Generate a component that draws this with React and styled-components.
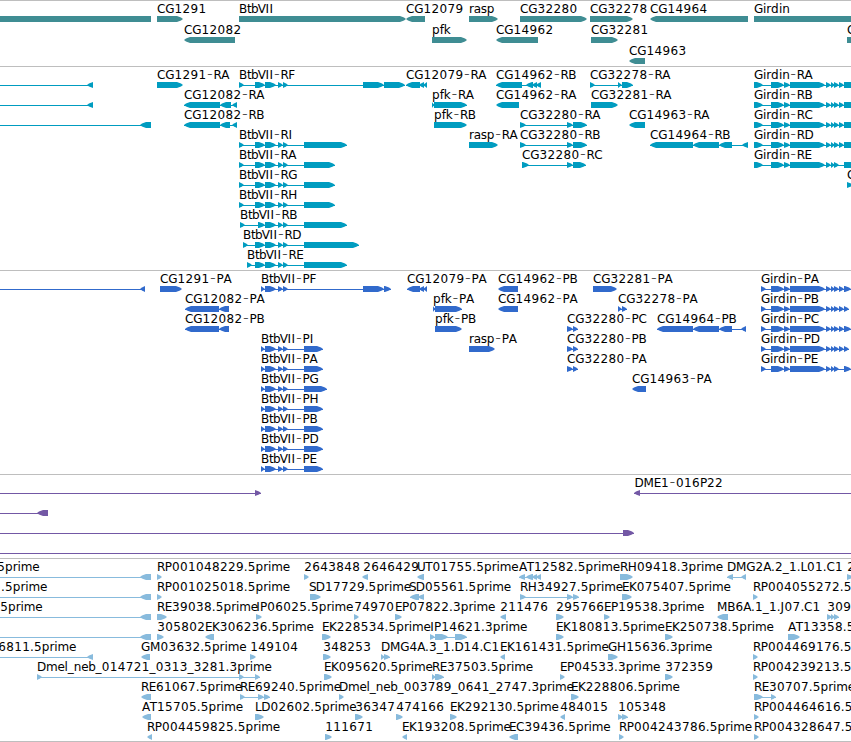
import styled, { createGlobalStyle } from "styled-components";

const WIDTH = 851;
const OFF_LEFT = [-30, -20];
const OFF_RIGHT = [870, 880];

// horizontal advance of each character in the labels
const ADVANCES = {
    A: 7.8, B: 8, C: 8.3, D: 9, E: 7, F: 7, G: 9, H: 9, I: 4, J: 4, K: 7.6,
    L: 6.3, M: 10.2, P: 7, R: 7.8, S: 6.7, T: 7, U: 8.3, V: 7, a: 7, b: 7.3,
    d: 7.8, e: 7, f: 4, i: 3.3, k: 7, l: 3.3, m: 11.5, n: 7.4, p: 7.7, r: 4.8,
    s: 6, t: 4, ".": 3.7, "-": 7.2, _: 6,
};

// nudges a glyph inside its advance
const OFFSETS = { V: -0.6, "-": 0.7, I: 0.2 };

const BAR_TOP = 15;
const BAR_BOTTOM = 21;

const feature = (label, x, dir, ...exons) => ({ label, x, dir, exons });

const labelPositions = (label, start) => {
    let x = start;
    return [...label]
        .map(char => {
            const digit = /\d/.test(char);
            const at = x + (digit ? 0.2 : OFFSETS[char] || 0);
            x += digit ? 8 : ADVANCES[char];
            return at.toFixed(1);
        })
        .join(" ");
};

const exonPoints = ([start, end], dir) => {
    const middle = (BAR_TOP + BAR_BOTTOM) / 2;
    const tip = Math.min(6, end - start);
    if (dir === "<") {
        return `${start},${middle} ${start + 2},${middle - 1.5} ${start + tip},${BAR_TOP} ${end},${BAR_TOP} ${end},${BAR_BOTTOM} ${start + tip},${BAR_BOTTOM} ${start + 2},${middle + 1.5}`;
    }
    return `${start},${BAR_TOP} ${end - tip},${BAR_TOP} ${end - 2},${middle - 1.5} ${end},${middle} ${end - 2},${middle + 1.5} ${end - tip},${BAR_BOTTOM} ${start},${BAR_BOTTOM}`;
};

// BtbVII and Girdin isoforms share most of their exons
const btbVII = (name, start, second, ...rest) =>
    feature(
        `BtbVII-${name}`, start, ">",
        [start, start + 5], [second, 265], [265, 276], [278, 283], [283, 288], ...rest
    );

const btbVIIProtein = (name, ...rest) =>
    feature(
        `BtbVII-${name}`, 261, ">",
        [261, 265], [265, 276], [278, 283], [283, 288], ...rest
    );

const girdin = (name, first, last, gap) =>
    feature(
        `Girdin-${name}`, first[0], ">",
        first, [771, 784], [784, 790], [790, 825], [826, 831], [831, 835], [834, 839],
        ...(gap ? [] : [[839, 844]]), last
    );

const GENES = [
    [
        feature("", 0, "<", [-20, 151]),
        feature("CG1291", 157, ">", [157, 183]),
        feature("BtbVII", 239, ">", [239, 406]),
        feature("CG12079", 406, "<", [406, 425]),
        feature("rasp", 469, ">", [469, 498]),
        feature("CG32280", 520, ">", [520, 587]),
        feature("CG32278", 590, ">", [590, 633]),
        feature("CG14964", 650, "<", [650, 748]),
        feature("Girdin", 754, ">", [754, 870]),
    ],
    [
        feature("CG12082", 184, "<", [184, 235]),
        feature("pfk", 432, ">", [432, 467]),
        feature("CG14962", 496, "<", [496, 538]),
        feature("CG32281", 591, ">", [591, 618]),
        feature("C", 847, ">", [847, 870]),
    ],
    [feature("CG14963", 629, "<", [629, 645])],
];

const TRANSCRIPTS = [
    [
        feature("", 0, "<", OFF_LEFT, [87, 93]),
        feature("CG1291-RA", 157, ">", [157, 183]),
        btbVII("RF", 239, 255, [363, 384], [384, 405]),
        feature("CG12079-RA", 406, "<", [406, 420], [419, 424], [423, 427]),
        feature("CG14962-RB", 496, "<", [496, 522], [526, 533], [532, 537], [536, 541]),
        feature("CG32278-RA", 590, ">", [590, 595], [618, 622], [622, 633]),
        girdin("RA", [754, 763], [844, 870]),
    ],
    [
        feature("", 0, "<", OFF_LEFT, [87, 93]),
        feature("CG12082-RA", 184, "<", [184, 220], [220, 231], [232, 237]),
        feature("pfk-RA", 432, ">", [432, 435], [434, 467]),
        feature("CG14962-RA", 496, "<", [496, 519]),
        feature("CG32281-RA", 591, ">", [591, 618]),
        girdin("RB", [754, 763], [844, 870]),
    ],
    [
        feature("", 0, "<", OFF_LEFT, [140, 151]),
        feature("CG12082-RB", 184, "<", [184, 220], [220, 230], [232, 237]),
        feature("pfk-RB", 434, ">", [434, 467]),
        feature("CG32280-RA", 520, ">", [520, 526], [567, 573], [573, 587]),
        feature("CG14963-RA", 629, "<", [629, 645]),
        girdin("RC", [754, 763], [844, 870]),
    ],
    [
        btbVII("RI", 239, 255, [304, 347]),
        feature("rasp-RA", 469, ">", [469, 498]),
        feature("CG32280-RB", 520, ">", [520, 526], [567, 573], [573, 587]),
        feature("CG14964-RB", 650, "<", [650, 693], [693, 719], [719, 732], [742, 748]),
        girdin("RD", [754, 763], [844, 870]),
    ],
    [
        btbVII("RA", 239, 255, [304, 335]),
        feature("CG32280-RC", 522, ">", [522, 529], [567, 573], [573, 586]),
        girdin("RE", [754, 763], [844, 870], true),
    ],
    [
        btbVII("RG", 239, 255, [304, 335]),
        feature("C", 847, ">", [847, 853]),
    ],
    [btbVII("RH", 239, 255, [304, 335])],
    [btbVII("RB", 240, 258, [304, 347])],
    [btbVII("RD", 243, 255, [304, 359])],
    [btbVII("RE", 247, 255, [304, 347])],
];

const PROTEINS = [
    [
        feature("", 0, "<", OFF_LEFT, [140, 145]),
        feature("CG1291-PA", 160, ">", [160, 182]),
        btbVIIProtein("PF", [363, 384], [384, 391]),
        feature("CG12079-PA", 407, "<", [407, 420], [419, 424], [423, 427]),
        feature("CG14962-PB", 498, "<", [498, 518]),
        feature("CG32281-PA", 593, ">", [593, 617]),
        girdin("PA", [761, 766], [844, 851]),
    ],
    [
        feature("CG12082-PA", 185, "<", [185, 219], [219, 229]),
        feature("pfk-PA", 433, ">", [433, 436], [435, 462]),
        feature("CG14962-PA", 498, "<", [498, 518]),
        feature("CG32278-PA", 618, ">", [618, 622], [622, 627]),
        girdin("PB", [761, 766], [844, 849]),
    ],
    [
        feature("CG12082-PB", 185, "<", [185, 219], [219, 229]),
        feature("pfk-PB", 435, ">", [435, 462]),
        feature("CG32280-PC", 567, ">", [567, 573], [573, 578]),
        feature("CG14964-PB", 657, "<", [657, 693], [693, 719], [719, 732], [741, 746]),
        girdin("PC", [761, 766], [844, 851]),
    ],
    [
        btbVIIProtein("PI", [304, 323]),
        feature("rasp-PA", 469, ">", [469, 495]),
        feature("CG32280-PB", 567, ">", [567, 573], [573, 578]),
        girdin("PD", [761, 766], [844, 849]),
    ],
    [
        btbVIIProtein("PA", [304, 323]),
        feature("CG32280-PA", 567, ">", [567, 573], [573, 578]),
        girdin("PE", [761, 766], [844, 851], true),
    ],
    [
        btbVIIProtein("PG", [304, 327]),
        feature("CG14963-PA", 632, "<", [632, 646]),
    ],
    [btbVIIProtein("PH", [304, 323])],
    [btbVIIProtein("PB", [304, 323])],
    [btbVIIProtein("PD", [304, 323])],
    [btbVIIProtein("PE", [304, 323])],
];

const CLONES = [
    [
        feature("", 0, ">", OFF_LEFT, [255, 261]),
        feature("DME1-016P22", 634.5, "<", [634, 640], OFF_RIGHT),
    ],
    [feature("", 0, "<", OFF_LEFT, [37, 48])],
    [feature("", 0, ">", OFF_LEFT, [623, 634])],
    [feature("", 0, ">", OFF_LEFT, OFF_RIGHT)],
];

const ESTS = [
    [
        feature("5prime", -3, "<", OFF_LEFT, [140, 151]),
        feature("RP001048229.5prime", 157, ">", [157, 162]),
        feature("2643848", 304, ">", [304, 309]),
        feature("2646429", 363, "<", [362, 368]),
        feature("UT01755.5prime", 417, "<", [417, 424]),
        feature("AT12582.5prime", 519, "<", [519, 525], [526, 533], [532, 537], [536, 541]),
        feature("RH09418.3prime", 620, ">", [620, 633]),
        feature("DMG2A.2_1.L01.C1", 727, "<", [727, 733], [741, 746]),
        feature("2", 847, ">", [847, 853]),
    ],
    [
        feature(".5prime", 1, "<", OFF_LEFT, [140, 151]),
        feature("RP001025018.5prime", 157, ">", [157, 162]),
        feature("SD17729.5prime", 309, ">", [310, 321]),
        feature("SD05561.5prime", 409, "<", [410, 419], [418, 424]),
        feature("RH34927.5prime", 520, ">", [520, 526], [567, 573], [573, 579]),
        feature("EK075407.5prime", 622, ">", [622, 632]),
        feature("RP004055272.5prime", 753, ">", [753, 758]),
    ],
    [
        feature("5prime", 0, "<", OFF_LEFT, [140, 151]),
        feature("RE39038.5prime", 157, ">", [157, 167]),
        feature("IP06025.5prime", 256, ">", [256, 262]),
        feature("74970", 354, ">", [354, 359]),
        feature("EP07822.3prime", 395, ">", [395, 402]),
        feature("211476", 500, "<", [500, 506]),
        feature("295766", 556, ">", [556, 564]),
        feature("EP19538.3prime", 604, ">", [604, 610]),
        feature("MB6A.1_1.J07.C1", 717, "<", [717, 728]),
        feature("309", 827, ">", [827, 832], [831, 835], [834, 839]),
    ],
    [
        feature("", 0, "<", OFF_LEFT, [140, 151]),
        feature("305802", 157, ">", [157, 164]),
        feature("EK306236.5prime", 205, "<", [205, 214]),
        feature("EK228534.5prime", 322, ">", [322, 331]),
        feature("IP14621.3prime", 430, ">", [430, 435], [435, 448], [455, 467]),
        feature("EK180813.5prime", 556, ">", [556, 564]),
        feature("EK250738.5prime", 665, ">", [665, 673]),
        feature("AT13358.5prime", 788, ">", [788, 800]),
    ],
    [
        feature("6811.5prime", -2, "<", OFF_LEFT, [87, 93]),
        feature("GM03632.5prime", 141, "<", [141, 150]),
        feature("149104", 250, ">", [250, 256]),
        feature("348253", 323, ">", [323, 331]),
        feature("DMG4A.3_1.D14.C1", 381, ">", [381, 385], [384, 390]),
        feature("EK161431.5prime", 500, "<", [500, 505]),
        feature("GH15636.3prime", 608, ">", [608, 618]),
        feature("RP004469176.5prime", 753, ">", [753, 758]),
    ],
    [
        feature("Dmel_neb_014721_0313_3281.3prime", 37, ">", [37, 42], [239, 244], [255, 260]),
        feature("EK095620.5prime", 324, ">", [324, 332]),
        feature("RE37503.5prime", 432, ">", [432, 436], [435, 444]),
        feature("EP04533.3prime", 560, ">", [560, 565]),
        feature("372359", 665, ">", [665, 673]),
        feature("RP004239213.5prime", 753, ">", [753, 758]),
    ],
    [
        feature("RE61067.5prime", 141, "<", [141, 151]),
        feature("RE69240.5prime", 240, ">", [240, 245], [258, 264], [264, 270]),
        feature("Dmel_neb_003789_0641_2747.3prime", 339, ">", [339, 344]),
        feature("EK228806.5prime", 571, ">", [571, 579]),
        feature("RE30707.5prime", 754, ">", [754, 763], [771, 776]),
    ],
    [
        feature("AT15705.5prime", 142, "<", [142, 151]),
        feature("LD02602.5prime", 255, ">", [255, 264]),
        feature("36347", 355, ">", [355, 363]),
        feature("474166", 396, ">", [396, 403]),
        feature("EK292130.5prime", 450, ">", [450, 457]),
        feature("484015", 560, "<", [560, 565]),
        feature("105348", 618, ">", [618, 623], [622, 628]),
        feature("RP004464616.5prime", 754, ">", [754, 759]),
    ],
    [
        feature("RP004459825.5prime", 147, "<", [147, 152]),
        feature("111671", 325, ">", [325, 332]),
        feature("EK193208.5prime", 402, "<", [402, 407]),
        feature("EC39436.5prime", 509, "<", [509, 518]),
        feature("RP004243786.5prime", 619, ">", [619, 624]),
        feature("RP004328647.5prime", 754, ">", [754, 759]),
    ],
];

const TRACKS = [
    { id: "genes", color: "#3f8d93", rowHeight: 21, gap: 2, rows: GENES },
    { id: "transcripts", color: "#009cc0", rowHeight: 20, gap: 3, rows: TRANSCRIPTS },
    { id: "proteins", color: "#316acc", rowHeight: 20, gap: 3, rows: PROTEINS },
    { id: "clones", color: "#7358a5", rowHeight: 20, gap: 3, rows: CLONES },
    { id: "ests", color: "#88bbdd", rowHeight: 20, gap: 2, rows: ESTS },
];

const Feature = ({ label, x, dir, exons }) => (
    <g>
        {exons.length > 1 ? (
            <rect
                x={exons[0][0]}
                y={18}
                width={exons[exons.length - 1][1] - exons[0][0]}
                height={1}
            />
        ) : null}
        {exons.map(exon => (
            <polygon key={exon[0]} points={exonPoints(exon, dir)} />
        ))}
        {label ? (
            <Label x={labelPositions(label, x)} y={12}>
                {label.split(/(-)/).map((part, index) =>
                    part === "-" ? <Hyphen key={index}>-</Hyphen> : part
                )}
            </Label>
        ) : null}
    </g>
);

const App = () => {
    return (
        <>
            <GlobalStyle />
            <Browser>
                {TRACKS.map(track => (
                    <Track key={track.id} $gap={track.gap}>
                        {track.rows.map((row, index) => (
                            <Row
                                key={index}
                                width={WIDTH}
                                height={track.rowHeight}
                                $color={track.color}
                            >
                                {row.map(item => (
                                    <Feature key={item.label + item.exons[0][0]} {...item} />
                                ))}
                            </Row>
                        ))}
                    </Track>
                ))}
                <EndLine />
            </Browser>
        </>
    );
};

const GlobalStyle = createGlobalStyle`
    body {
        margin: 0;
        background: #fff;
        overflow: hidden;
    }
`;

const Browser = styled.main`
    display: flex;
    flex-direction: column;
    width: 851px;
    height: 742px;
    overflow: hidden;
    background: #fff;
`;

const Track = styled.section`
    display: flex;
    flex-direction: column;
    flex: none;
    padding-bottom: ${props => props.$gap}px;
    border-top: 1px solid #bebebe;
`;

const Row = styled.svg`
    display: block;
    flex: none;
    overflow: visible;
    fill: ${props => props.$color};
`;

const Label = styled.text`
    fill: #000;
    font-family: "DejaVu Sans", sans-serif;
    font-size: 12px;
`;

// wider than the default dash so that it fills its advance
const Hyphen = styled.tspan`
    font-size: 16px;
    font-weight: 200;
`;

const EndLine = styled.div`
    flex: none;
    height: 1px;
    background: #bebebe;
`;

export default App;
